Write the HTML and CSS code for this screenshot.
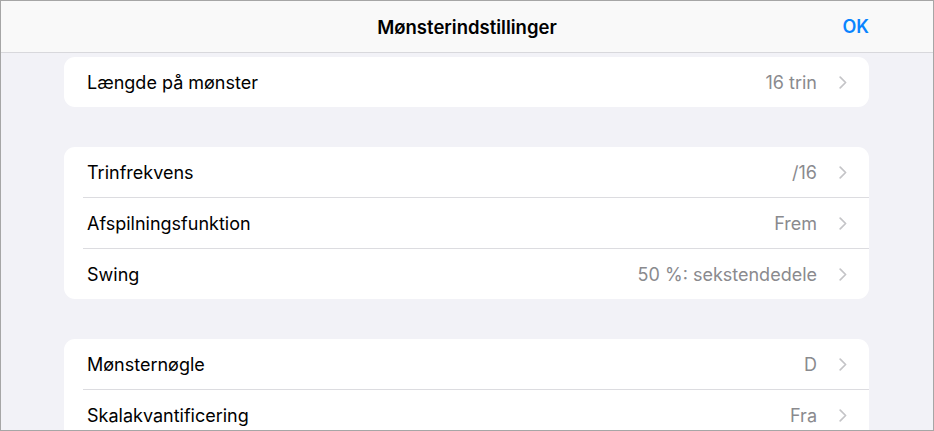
FILE: index.html
```html
<!DOCTYPE html>
<html lang="da">
<head>
    <meta charset="UTF-8">
    <meta name="viewport" content="width=device-width, initial-scale=1.0">
    <title>Mønsterindstillinger</title>
    <link rel="stylesheet" href="styles.css">
</head>
<body>
    <div class="screen">
        <!-- Navigationslinje -->
        <header class="navbar">
            <span class="nav-spacer"></span>
            <h1 class="nav-title">Mønsterindstillinger</h1>
            <span class="nav-done">OK</span>
        </header>

        <div class="content">
            <div class="group">
                <div class="row">
                    <span class="label">Længde på mønster</span>
                    <span class="value">16 trin</span>
                    <svg class="chevron" viewBox="0 0 8 13"><path d="M1.2 1.2 L6.6 6.5 L1.2 11.8"/></svg>
                </div>
            </div>

            <div class="group">
                <div class="row">
                    <span class="label">Trinfrekvens</span>
                    <span class="value">/16</span>
                    <svg class="chevron" viewBox="0 0 8 13"><path d="M1.2 1.2 L6.6 6.5 L1.2 11.8"/></svg>
                </div>
                <div class="row">
                    <span class="label">Afspilningsfunktion</span>
                    <span class="value">Frem</span>
                    <svg class="chevron" viewBox="0 0 8 13"><path d="M1.2 1.2 L6.6 6.5 L1.2 11.8"/></svg>
                </div>
                <div class="row">
                    <span class="label">Swing</span>
                    <span class="value">50 %: sekstendedele</span>
                    <svg class="chevron" viewBox="0 0 8 13"><path d="M1.2 1.2 L6.6 6.5 L1.2 11.8"/></svg>
                </div>
            </div>

            <div class="group">
                <div class="row">
                    <span class="label">Mønsternøgle</span>
                    <span class="value">D</span>
                    <svg class="chevron" viewBox="0 0 8 13"><path d="M1.2 1.2 L6.6 6.5 L1.2 11.8"/></svg>
                </div>
                <div class="row">
                    <span class="label">Skalakvantificering</span>
                    <span class="value">Fra</span>
                    <svg class="chevron" viewBox="0 0 8 13"><path d="M1.2 1.2 L6.6 6.5 L1.2 11.8"/></svg>
                </div>
            </div>
        </div>
    </div>
</body>
</html>
```

FILE: styles.css
```css
body {
    font-family: "Inter", "Roboto", sans-serif;
    margin: 0;
    padding: 0;
    background-color: #f2f2f7;
}

.screen {
    box-sizing: border-box;
    width: 934px;
    height: 431px;
    border: 1px solid #a6a6a6;
    background-color: #f2f2f7;
    overflow: hidden;
}

/* Navigationslinje */
.navbar {
    display: flex;
    align-items: center;
    height: 51px;
    padding: 0 64px;
    background-color: #f9f9f9;
    border-bottom: 1px solid #d8d8dc;
}

.nav-spacer {
    width: 60px;
}

.nav-title {
    flex: 1;
    margin: 0;
    text-align: center;
    font-size: 18.5px;
    font-weight: 600;
    color: #000;
}

.nav-done {
    width: 60px;
    text-align: right;
    font-size: 18px;
    font-weight: 600;
    color: #0a84ff;
}

/* Indhold */
.content {
    padding: 4px 64px 0 63px;
}

.group {
    background-color: #fff;
    border-radius: 11px;
    margin-bottom: 40px;
    overflow: hidden;
}

.row {
    display: flex;
    align-items: center;
    height: 50px;
    padding: 0 22px 0 23px;
}

.row + .row {
    border-top: 1px solid #dcdce0;
    margin-left: 19px;
    padding-left: 4px;
}

.label {
    flex: 1;
    font-size: 18px;
    color: #000;
}

.value {
    font-size: 18px;
    color: #8a8a8e;
    margin-right: 22px;
}

.chevron {
    width: 8px;
    height: 13px;
    fill: none;
    stroke: #c4c4c7;
    stroke-width: 1.7;
    stroke-linecap: round;
    stroke-linejoin: round;
}
```
